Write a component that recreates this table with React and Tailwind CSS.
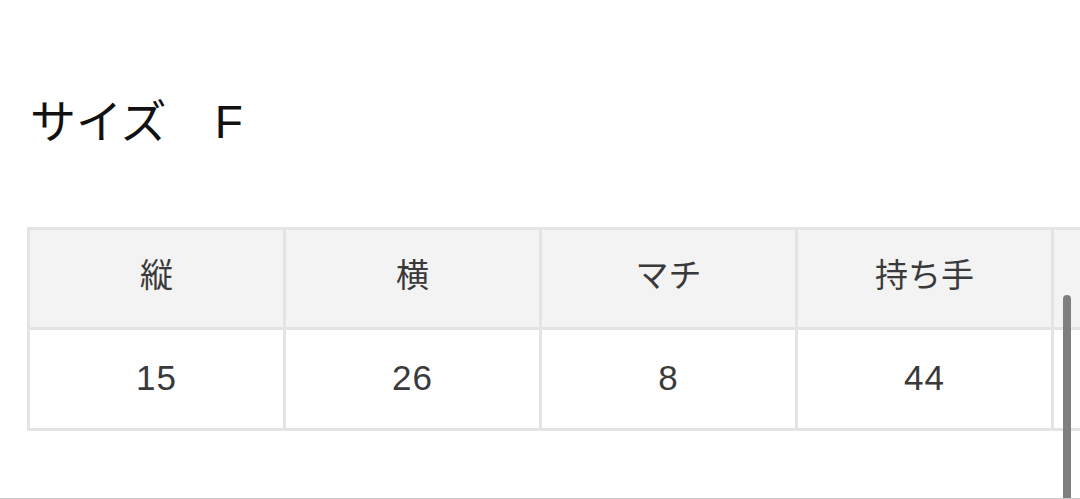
const cols = [
  { head: "縦", value: "15" },
  { head: "横", value: "26" },
  { head: "マチ", value: "8" },
  { head: "持ち手", value: "44" },
  { head: "", value: "" },
];

const jp = { fontFamily: '"Liberation Sans", "Noto Sans CJK JP", sans-serif' };

export default function App() {
  return (
    <div
      className="relative w-[1080px] h-[499px] overflow-hidden bg-white border-b border-[#c9c9c9]"
      style={jp}
    >
      <h1 className="pl-[30px] pt-[99px] text-[46px] leading-[46px] text-[#111] font-normal whitespace-pre">
        サイズ　<span className="ml-[2px]">F</span>
      </h1>

      <div className="ml-[27px] mt-[82px] w-[1283px]">
        <table className="table-fixed border-collapse w-[1283px] text-[#3a3a3a]">
          <tbody>
            <tr className="bg-[#f3f3f3] text-[33px] leading-[33px]">
              {cols.map((c, i) => (
                <td
                  key={i}
                  className="w-[256px] h-[100px] border-[3px] border-[#e4e4e4] text-center align-middle p-0 pb-[6px]"
                >
                  {c.head}
                </td>
              ))}
            </tr>
            <tr className="text-[35px] leading-[35px] tracking-[1px]">
              {cols.map((c, i) => (
                <td
                  key={i}
                  className="w-[256px] h-[101px] border-[3px] border-[#e4e4e4] text-center align-middle p-0 pb-[4px]"
                >
                  {c.value}
                </td>
              ))}
            </tr>
          </tbody>
        </table>
      </div>

      {/* scroll indicator */}
      <div className="absolute left-[1063px] top-[295px] w-[8px] h-[230px] rounded-full bg-[#7f7f7f]" />
    </div>
  );
}
